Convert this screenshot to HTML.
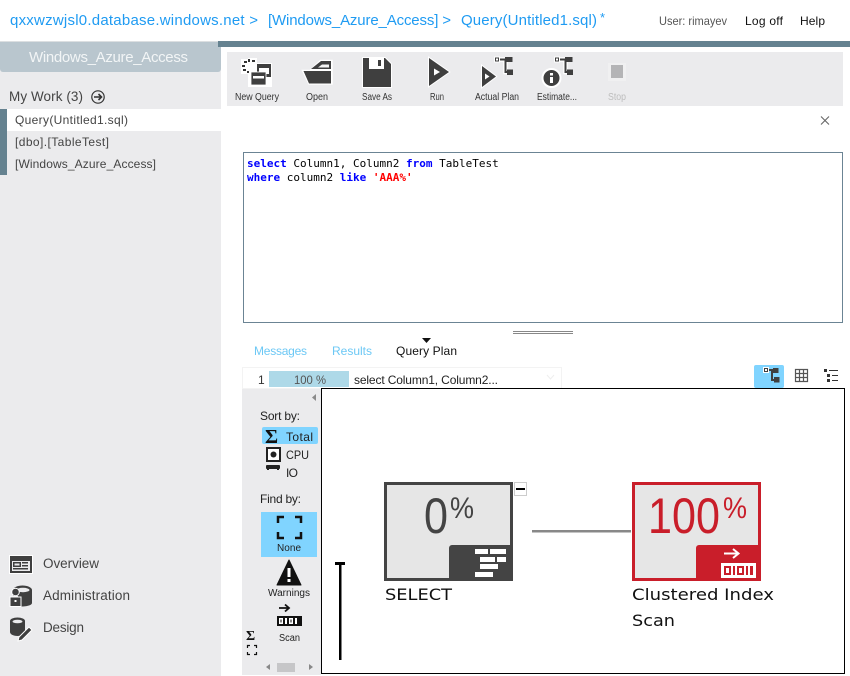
<!DOCTYPE html>
<html><head><meta charset="utf-8"><title>Query</title>
<style>
html,body{margin:0;padding:0;background:#fff;width:850px;height:676px;overflow:hidden}
svg{display:block}
text{font-family:"Liberation Sans",sans-serif;white-space:pre}
.m{font-family:"DejaVu Sans Mono","Liberation Mono",monospace;font-size:11px}
.h{font-size:15px;fill:#1f9bf2}
.t{font-size:10px;fill:#333}
.n{font-size:13.5px;fill:#444}
.s{font-size:12px;fill:#444}
.p{font-size:16px;fill:#111;font-family:"DejaVu Sans",sans-serif}
.d{fill:#3f3f3f}
.w{stroke:#fff;stroke-width:2;paint-order:stroke}
</style></head><body>
<svg width="850" height="676" viewBox="0 0 850 676" xmlns="http://www.w3.org/2000/svg">
<rect width="850" height="676" fill="#fff"/>
<!-- header -->
<text class="h" x="10" y="25" textLength="248">qxxwzwjsl0.database.windows.net &gt;</text>
<text class="h" x="268" y="25" textLength="183">[Windows_Azure_Access] &gt;</text>
<text class="h" x="461" y="25" textLength="136">Query(Untitled1.sql)</text>
<text x="600" y="22" style="font-size:13px;fill:#1f9bf2">*</text>
<text x="659" y="25" textLength="68" lengthAdjust="spacingAndGlyphs" style="font-size:12px;fill:#555">User: rimayev</text>
<text x="745" y="25" textLength="38" style="font-size:12px;fill:#111">Log off</text>
<text x="800" y="25" textLength="25" style="font-size:12px;fill:#111">Help</text>
<!-- left panel -->
<rect x="0" y="41" width="221" height="635" fill="#ebebed"/>
<rect x="0" y="41" width="218" height="1" fill="#dcdfe1"/>
<path d="M0 42H221V69a3 3 0 0 1-3 3H3a3 3 0 0 1-3-3Z" fill="#b9c6ce"/>
<rect x="218" y="41" width="632" height="6" fill="#658290"/>
<text x="29" y="62" textLength="159" style="font-size:15px;fill:#f2f5f6">Windows_Azure_Access</text>
<text class="n" x="9" y="101" textLength="74">My Work (3)</text>
<circle cx="98" cy="97" r="6.2" fill="none" stroke="#333" stroke-width="1.2"/>
<path d="M94 97H101M98.5 94L101.5 97L98.500 100" fill="none" stroke="#333" stroke-width="1.6"/>
<rect x="0" y="109" width="7" height="66" fill="#658290"/>
<rect x="7" y="109" width="214" height="22" fill="#fff"/>
<text class="s" x="15" y="124" textLength="113">Query(Untitled1.sql)</text>
<text class="s" x="15" y="146" textLength="94">[dbo].[TableTest]</text>
<text class="s" x="15" y="168" textLength="141">[Windows_Azure_Access]</text>
<!-- nav -->
<rect x="9" y="555" width="24" height="19" fill="#fff"/>
<rect x="10" y="556" width="22" height="17" class="d"/>
<rect x="12" y="561" width="18" height="10" fill="#ebebed"/>
<rect x="13" y="562" width="8" height="5" class="d"/><rect x="14.5" y="563.5" width="5" height="2" fill="#ebebed"/>
<rect x="22" y="562" width="6" height="1.500" class="d"/><rect x="22" y="565" width="6" height="1.500" class="d"/><rect x="13" y="568" width="15" height="1.500" class="d"/>
<text class="n" x="43" y="568" textLength="56">Overview</text>
<path d="M13 590a9.500 4.500 0 0 1 19 0V603a9.500 3.500 0 0 1-9 3.500H18V596H13Z" class="d"/>
<ellipse cx="23" cy="590" rx="6.500" ry="2.200" fill="#ebebed"/>
<circle cx="15.500" cy="592" r="3.800" class="d" stroke="#fff"/>
<rect x="10" y="597" width="11" height="9.500" class="d" stroke="#fff" stroke-width="1"/>
<rect x="14.500" y="600" width="2" height="2" fill="#fff"/>
<text class="n" x="43" y="600" textLength="87">Administration</text>
<path d="M10 621a7.500 3.500 0 0 1 15 0V632a7.500 4 0 0 1-15 0Z" class="d"/>
<ellipse cx="17.500" cy="621.500" rx="5" ry="1.800" fill="#ebebed"/>
<path d="M19 637L29 627L32 630L22 640L18 641Z" class="d" stroke="#fff"/>
<text class="n" x="43" y="632" textLength="41">Design</text>
<!-- toolbar -->
<rect x="227" y="52" width="616" height="54" fill="#ebebed"/>
<path d="M248 58H257V63H272V87H248V74H241V59H248Z" fill="#fff"/>
<g fill="#333">
<rect x="248" y="59" width="2" height="3"/><rect x="252" y="60" width="3" height="2"/><rect x="244" y="61" width="3" height="2"/><rect x="242" y="65" width="3" height="2"/><rect x="243" y="69" width="3" height="2"/><rect x="247" y="71" width="2" height="2"/>
</g>
<rect x="257" y="64" width="14" height="13" class="d"/><rect x="259" y="68" width="10" height="6" fill="#fff"/>
<rect x="251" y="72" width="15" height="13" class="d" stroke="#fff" stroke-width=".8"/><rect x="253" y="76" width="11" height="2.500" fill="#fff"/>
<path d="M302.500 70.500H310L320.500 60.500H332V84H309Z" fill="#fff" stroke="#fff" stroke-width="1.500"/>
<path d="M303.500 71H331V83.500H309Z" class="d"/>
<path d="M311 69L321 61H331V69Z" class="d"/>
<path d="M322 64.500H329V67.500H318Z" fill="#f4f4f4"/>
<path d="M363 58H385L391 64V87H363Z" class="d w"/>
<rect x="369" y="58" width="15" height="11" fill="#fff"/><rect x="378" y="60" width="3" height="6" class="d"/>
<path d="M429 58L449 72L429 86Z" class="d w"/>
<path d="M434 68.500L440 72L434 75.500Z" fill="#fff"/>
<path d="M482 66L496 76.500L482 87Z" class="d w"/>
<path d="M485 73.500L489.500 76.500L485 79.500Z" fill="#fff"/>
<g id="tree">
<path d="M498 59.500H509M505.500 59.500V72H509" fill="none" stroke="#fff" stroke-width="4.500"/>
<path d="M498 59.500H509M505.500 59.500V72H509" fill="none" stroke="#3f3f3f" stroke-width="2"/>
<rect x="494.500" y="57" width="5" height="5" class="d" stroke="#fff"/><rect x="496" y="58.500" width="2" height="2" fill="#fff"/>
<rect x="505" y="57" width="7.500" height="5" class="d"/><rect x="507" y="69.500" width="6" height="5.500" class="d"/>
</g>
<use href="#tree" x="60"/>
<circle cx="551.500" cy="78" r="9" class="d" stroke="#fff" stroke-width="2"/>
<rect x="550" y="77" width="3" height="6" fill="#fff"/><rect x="550" y="73" width="3" height="2.500" fill="#fff"/>
<rect x="608" y="63" width="18" height="18" fill="#f0f0f1"/><rect x="611" y="65" width="12" height="13" fill="#b4b4b6"/>
<text class="t" x="235" y="100" textLength="44" lengthAdjust="spacingAndGlyphs">New Query</text>
<text class="t" x="306" y="100" textLength="22" lengthAdjust="spacingAndGlyphs">Open</text>
<text class="t" x="362" y="100" textLength="30" lengthAdjust="spacingAndGlyphs">Save As</text>
<text class="t" x="430" y="100" textLength="14" lengthAdjust="spacingAndGlyphs">Run</text>
<text class="t" x="475" y="100" textLength="44" lengthAdjust="spacingAndGlyphs">Actual Plan</text>
<text class="t" x="537" y="100" textLength="40" lengthAdjust="spacingAndGlyphs">Estimate...</text>
<text class="t" x="608" y="100" textLength="18" lengthAdjust="spacingAndGlyphs" style="fill:#bdbdbd">Stop</text>
<path d="M821 116.500L829 124.500M829 116.500L821 124.500" stroke="#666" stroke-width="1.100"/>
<!-- editor -->
<rect x="243.500" y="152.500" width="599" height="170" fill="#fff" stroke="#6b8494"/>
<text class="m" x="247" y="167" fill="#000"><tspan fill="#00f" font-weight="bold">select</tspan> Column1, Column2 <tspan fill="#00f" font-weight="bold">from</tspan> TableTest</text>
<text class="m" x="247" y="181" fill="#000"><tspan fill="#00f" font-weight="bold">where</tspan> column2 <tspan fill="#00f" font-weight="bold">like</tspan> <tspan fill="#f00" font-weight="bold">'AAA%'</tspan></text>
<rect x="513" y="331" width="60" height="1" fill="#888"/><rect x="513" y="333" width="60" height="1" fill="#888"/>
<!-- tabs -->
<path d="M422 338H431L426.500 343Z" fill="#111"/>
<text x="254" y="355" textLength="53" style="font-size:12px;fill:#6cc8f5">Messages</text>
<text x="332" y="355" textLength="40" style="font-size:12px;fill:#6cc8f5">Results</text>
<text x="396" y="355" textLength="61" style="font-size:12px;fill:#111">Query Plan</text>
<rect x="242.500" y="367.500" width="319" height="21" fill="#fff" stroke="#f3f3f3"/>
<text x="258" y="384" style="font-size:12px;fill:#333">1</text>
<rect x="269" y="371" width="80" height="16" fill="#aed9e8"/>
<text x="294" y="384" textLength="32" lengthAdjust="spacingAndGlyphs" style="font-size:12px;fill:#555">100 %</text>
<text x="354" y="384" textLength="144" style="font-size:12px;fill:#222">select Column1, Column2...</text>
<path d="M547 375L550.500 379L554 375" fill="none" stroke="#eee"/>
<!-- view icons -->
<rect x="754" y="365" width="30" height="23" rx="2" fill="#80d4ff"/>
<path d="M768 370H775M772 370V380H775" fill="none" stroke="#3f3f3f" stroke-width="2"/>
<rect x="763.500" y="367.500" width="5" height="5" class="d" stroke="#fff"/><rect x="765" y="369" width="2" height="2" fill="#fff"/>
<rect x="773" y="368" width="5.500" height="5" class="d"/><rect x="774" y="377" width="5.500" height="5.500" class="d"/>
<g fill="none" stroke="#555" stroke-width="1.200"><path d="M795.500 369.500H807.500V381.500H795.500ZM795.500 373.500H807.500M795.500 377.500H807.500M799.500 369.500V381.500M803.500 369.500V381.500"/></g>
<g fill="#333"><rect x="824" y="369" width="3" height="3"/><rect x="829" y="370" width="9" height="1"/><rect x="827" y="374" width="3" height="3"/><rect x="832" y="375" width="6" height="1"/><rect x="827" y="379" width="3" height="3"/><rect x="832" y="380" width="6" height="1"/></g>
<!-- plan side -->
<rect x="242" y="389" width="79" height="286" fill="#ebebed"/>
<path d="M316 394L312 397.500L316 401Z" fill="#8a8a8a"/>
<text x="260" y="420" textLength="40" style="font-size:12px;fill:#222">Sort by:</text>
<rect x="262" y="427" width="56" height="17" rx="2" fill="#80d4ff"/>
<text x="265" y="443" style="font-size:20px;font-weight:bold;font-family:'Liberation Serif',serif;fill:#111">Σ</text>
<text x="286" y="441" textLength="27" style="font-size:12px;fill:#222">Total</text>
<rect x="266" y="447" width="15" height="15" fill="#222"/><rect x="268" y="449" width="11" height="11" fill="#fff"/><circle cx="273.500" cy="454.500" r="3" fill="#222"/>
<text x="286" y="459" textLength="23" lengthAdjust="spacingAndGlyphs" style="font-size:12px;fill:#222">CPU</text>
<rect x="266" y="465" width="14" height="4" rx="1" fill="#222"/><rect x="267" y="469" width="2" height="1" fill="#222"/><rect x="277" y="469" width="2" height="1" fill="#222"/>
<text x="286" y="477" textLength="12" style="font-size:12px;fill:#222">IO</text>
<text x="260" y="503" textLength="41" style="font-size:12px;fill:#222">Find by:</text>
<rect x="261" y="512" width="56" height="45" fill="#80d4ff"/>
<g fill="none" stroke="#111" stroke-width="2.500"><path d="M278 523V517H284M295 517H301V523M301 532V538H295M284 538H278V532"/></g>
<text x="277" y="551" textLength="24" style="font-size:10px;fill:#222">None</text>
<path d="M289 560L301 585H277Z" fill="#111" stroke="#111" stroke-linejoin="round"/><rect x="287.500" y="568" width="3" height="9" fill="#fff"/><rect x="287.500" y="579" width="3" height="3" fill="#fff"/>
<text x="268" y="596" textLength="42" lengthAdjust="spacingAndGlyphs" style="font-size:10px;fill:#222">Warnings</text>
<path d="M279 608H288M285 604.500L289 608L285 611.500" fill="none" stroke="#111" stroke-width="1.800"/>
<rect x="277" y="616" width="25" height="10" fill="#111"/>
<g fill="#fff"><rect x="279" y="618" width="4" height="6"/><rect x="285" y="618" width="2" height="6"/><rect x="289" y="618" width="4" height="6"/><rect x="295" y="618" width="2" height="6"/><rect x="280.500" y="619.500" width="1" height="3" fill="#111"/><rect x="290.500" y="619.500" width="1" height="3" fill="#111"/></g>
<text x="279" y="641" textLength="21" lengthAdjust="spacingAndGlyphs" style="font-size:10px;fill:#222">Scan</text>
<text x="246" y="640" style="font-size:14px;font-weight:bold;font-family:'Liberation Serif',serif;fill:#111">Σ</text>
<g fill="none" stroke="#111" stroke-width="1.200"><path d="M247.500 648V645.500H250M254 645.500H256.500V648M256.500 652V654.500H254M250 654.500H247.500V652"/></g>
<path d="M270 664V670L266 667Z" fill="#888"/><rect x="277" y="663" width="18" height="9" fill="#c6c6c8"/><path d="M309 664V670L313 667Z" fill="#888"/>
<!-- canvas -->
<rect x="321.500" y="388.500" width="523" height="285" fill="#fff" stroke="#000"/>
<rect x="339" y="564" width="2.500" height="96" fill="#000"/><rect x="335" y="562" width="10" height="3" fill="#000"/>
<!-- SELECT node -->
<rect x="385.500" y="483.500" width="126" height="96" fill="#e6e6e6" stroke="#444" stroke-width="3"/>
<text x="424" y="533" textLength="24" lengthAdjust="spacingAndGlyphs" style="font-size:50px;fill:#444">0</text>
<text x="450" y="518" textLength="24" lengthAdjust="spacingAndGlyphs" style="font-size:30px;fill:#444">%</text>
<path d="M449 581V548a3 3 0 0 1 3-3H513V581Z" fill="#444"/>
<g fill="#fff"><rect x="475" y="549" width="13" height="5"/><rect x="490" y="549" width="16" height="5"/><rect x="480" y="557" width="15" height="5"/><rect x="497" y="557" width="9" height="5"/><rect x="480" y="564" width="18" height="5"/><rect x="475" y="572" width="18" height="5"/></g>
<rect x="514.500" y="482.500" width="12" height="13" fill="#fff" stroke="#ccc"/><rect x="516" y="488" width="9" height="2" fill="#000"/>
<rect x="532" y="530" width="99" height="2.500" fill="#888"/>
<text class="p" x="385" y="600" textLength="67" lengthAdjust="spacingAndGlyphs">SELECT</text>
<!-- Scan node -->
<rect x="633.500" y="483.500" width="126" height="96" fill="#e6e6e6" stroke="#c91e2a" stroke-width="3"/>
<text x="648" y="533" textLength="72" lengthAdjust="spacingAndGlyphs" style="font-size:50px;fill:#c91e2a">100</text>
<text x="723" y="518" textLength="24" lengthAdjust="spacingAndGlyphs" style="font-size:30px;fill:#c91e2a">%</text>
<path d="M696 581V548a3 3 0 0 1 3-3H761V581Z" fill="#c91e2a"/>
<path d="M724 553.500H738M733 549L738.500 553.500L733 558" fill="none" stroke="#fff" stroke-width="2"/>
<rect x="721" y="563" width="35" height="15" fill="#fff"/>
<g fill="#c91e2a"><rect x="724" y="566" width="7" height="9"/><rect x="733" y="566" width="2" height="9"/><rect x="737" y="566" width="7" height="9"/><rect x="746" y="566" width="2" height="9"/><rect x="750" y="566" width="3" height="9"/></g>
<g fill="#fff"><rect x="726" y="568" width="3" height="5"/><rect x="739" y="568" width="3" height="5"/></g>
<text class="p" x="632" y="600" textLength="142" lengthAdjust="spacingAndGlyphs">Clustered Index</text>
<text class="p" x="632" y="626" textLength="43" lengthAdjust="spacingAndGlyphs">Scan</text>
</svg>
</body></html>
